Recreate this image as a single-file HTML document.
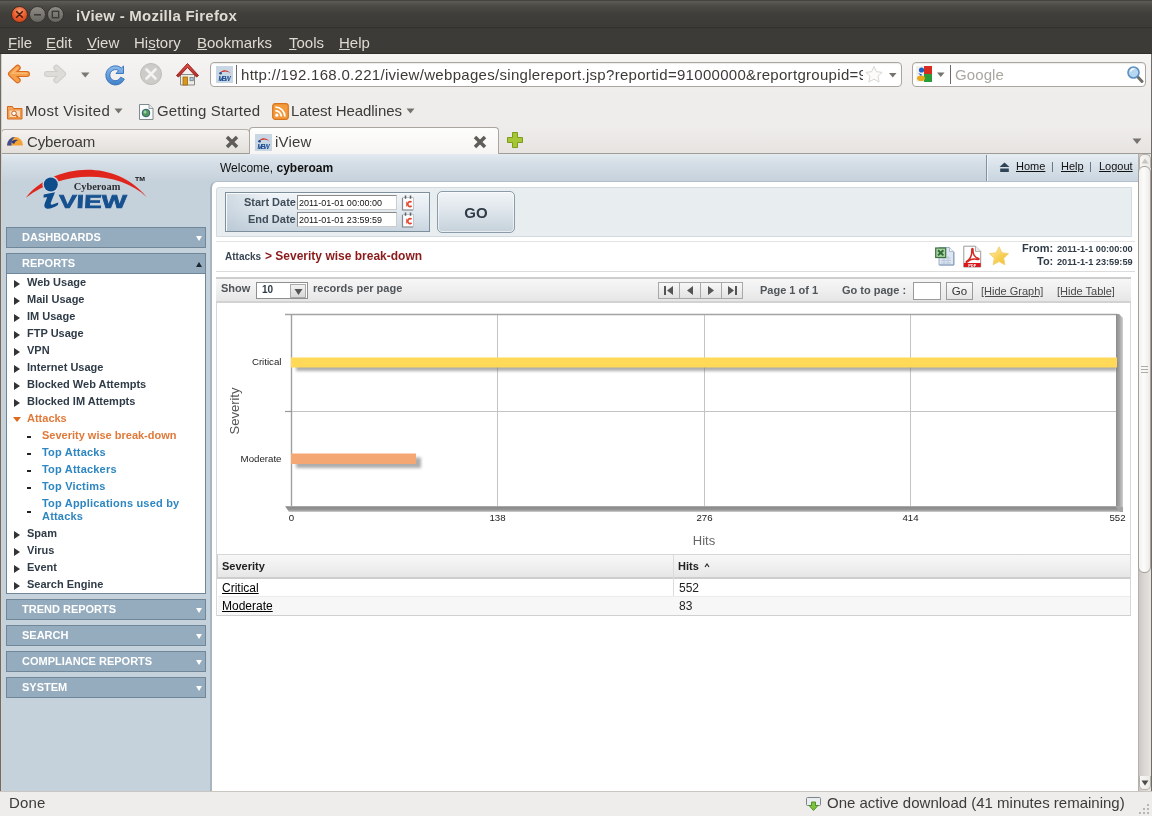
<!DOCTYPE html>
<html>
<head>
<meta charset="utf-8">
<title>iView - Mozilla Firefox</title>
<style>
*{box-sizing:border-box;margin:0;padding:0}
html,body{width:1152px;height:816px;overflow:hidden;background:#fff}
body{opacity:.9999;font-family:"Liberation Sans",Arial,sans-serif;font-size:12px;color:#000;position:relative}
.abs{position:absolute}
.ui{font-family:"Liberation Sans",sans-serif;font-size:15px;white-space:nowrap}
u{text-decoration:underline}
/* ---------- browser chrome ---------- */
#titlebar{left:0;top:0;width:1152px;height:29px;background:linear-gradient(#3a3935 0,#5b5a54 1.500px,#4b4a45 6px,#3f3e3a 14px,#3c3b37 26.500px,#33322e 27.500px,#3c3b37 29px);}
#titlebar .t{left:76px;top:7px;color:#dfdbd2;font-weight:bold;font-size:15px;letter-spacing:.24px}
#menubar{left:0;top:29px;width:1152px;height:25px;background:#3c3b37;border-bottom:1px solid #2f2e2b}
#menubar span{position:absolute;top:5px;color:#dfdbd2;font-size:15px}
#navbar{left:0;top:54px;width:1152px;height:42px;background:linear-gradient(#f5f4f3,#efedec)}
#bmbar{left:0;top:96px;width:1152px;height:30px;background:#efedec}
#tabbar{left:0;top:126px;width:1152px;height:28px;background:linear-gradient(#efedec,#e6e3e0)}
#status{left:0;top:791px;width:1152px;height:25px;background:#efedeb;border-top:1px solid #c9c5c0}
/* ---------- page ---------- */
#page{left:2px;top:154px;width:1136px;height:637px;background:#c5d2dc;overflow:hidden}
#side{left:0;top:0;width:209px;height:636px;background:linear-gradient(#e3eaf0 0,#d6dfe7 8px,#c5d1db 28px,#c5d2dc 100%)}
.hd{position:absolute;left:4px;width:200px;height:21px;background:#95acbe;border:1px solid #6f8799;color:#fff;font-weight:bold;font-size:11px;line-height:19px;padding-left:15px}
.hd i{position:absolute;right:3px;top:8px;width:0;height:0;border-left:3.5px solid transparent;border-right:3.5px solid transparent;border-top:5px solid #fff}
.hd i.up{border-top:none;border-bottom:5px solid #1b2630}

.li{position:absolute;left:25px;font-size:11px;font-weight:bold;color:#2f3b47;line-height:13px;white-space:nowrap}
.li.s{left:40px;color:#2e86c1;letter-spacing:.2px}
.li.s.o{letter-spacing:0}
.li.o{color:#e07a3a}
.tr{position:absolute;left:13px;width:0;height:0;border-top:4.500px solid transparent;border-bottom:4.500px solid transparent;border-left:6px solid #333}
.td{position:absolute;left:11px;width:0;height:0;border-left:4px solid transparent;border-right:4px solid transparent;border-top:5px solid #e06a1a}
.ds{position:absolute;left:25px;width:4px;height:2px;background:#222}
#list{position:absolute;left:4px;top:120px;width:200px;height:320px;background:#fff;border:1px solid #6f8799;border-top:none}
#list>*{margin-top:1px}

#main{left:-2px;top:-154px;width:1140px;height:944px}
#main div,#main span{position:absolute}
.b11{font-size:11px;font-weight:bold;color:#50555a;white-space:nowrap}
.lnk{font-size:11px;color:#111;text-decoration:underline;white-space:nowrap}
</style>
</head>
<body>
<div id="titlebar" class="abs">
<svg class="abs" style="left:8px;top:3px" width="60" height="24" viewBox="0 0 60 24">
<defs>
<radialGradient id="gc" cx="50%" cy="30%" r="70%"><stop offset="0" stop-color="#f79a6c"/><stop offset=".6" stop-color="#e9592a"/><stop offset="1" stop-color="#c8441c"/></radialGradient>
<linearGradient id="gg" x1="0" y1="0" x2="0" y2="1"><stop offset="0" stop-color="#8f8d86"/><stop offset="1" stop-color="#66645e"/></linearGradient>
</defs>
<circle cx="11.5" cy="11.5" r="8" fill="url(#gc)" stroke="#3a2a22" stroke-width="1"/>
<path d="M8.7 8.7l5.6 5.6M14.3 8.7l-5.6 5.6" stroke="#4a1d0c" stroke-width="1.6" stroke-linecap="round"/>
<circle cx="29.5" cy="11.5" r="8" fill="url(#gg)" stroke="#33322e" stroke-width="1"/>
<path d="M26 11.8h7" stroke="#3c3b37" stroke-width="1.6"/>
<circle cx="47.5" cy="11.5" r="8" fill="url(#gg)" stroke="#33322e" stroke-width="1"/>
<rect x="44.3" y="8.3" width="6.4" height="6.4" fill="none" stroke="#3c3b37" stroke-width="1.4"/>
</svg>
<span class="abs ui t">iView - Mozilla Firefox</span></div>
<div id="menubar" class="abs ui"><span style="left:8px"><u>F</u>ile</span><span style="left:46px"><u>E</u>dit</span><span style="left:87px"><u>V</u>iew</span><span style="left:134px">Hi<u>s</u>tory</span><span style="left:197px"><u>B</u>ookmarks</span><span style="left:289px"><u>T</u>ools</span><span style="left:339px"><u>H</u>elp</span></div>
<div id="navbar" class="abs">
<svg class="abs" style="left:0;top:0" width="210" height="42" viewBox="0 0 210 42">
<defs>
<linearGradient id="ga" x1="0" y1="0" x2="0" y2="1"><stop offset="0" stop-color="#f9b56f"/><stop offset="1" stop-color="#e8741d"/></linearGradient>
<linearGradient id="gf" x1="0" y1="0" x2="0" y2="1"><stop offset="0" stop-color="#e3e2e0"/><stop offset="1" stop-color="#cfcecb"/></linearGradient>
<linearGradient id="gr" x1="0" y1="0" x2="0" y2="1"><stop offset="0" stop-color="#8fbcec"/><stop offset="1" stop-color="#3f7fc8"/></linearGradient>
<linearGradient id="gh" x1="0" y1="0" x2="0" y2="1"><stop offset="0" stop-color="#e0524a"/><stop offset="1" stop-color="#b02a26"/></linearGradient>
</defs>
<!-- back -->
<g fill="none" stroke-linecap="round" stroke-linejoin="round"><path d="M27 20H12M17.700 13.700L11 20L17.700 26.300" stroke="#d9691c" stroke-width="6"/><path d="M27 20H12M17.700 13.700L11 20L17.700 26.300" stroke="#f6a04b" stroke-width="3.800"/><path d="M26.500 19.200H13M17.700 13.900L12 19.300" stroke="#f9b970" stroke-width="1.400"/></g>
<!-- forward -->
<g fill="none" stroke-linecap="round" stroke-linejoin="round"><path d="M47 20H62M56.300 13.700L63 20L56.300 26.300" stroke="#cfcecb" stroke-width="6"/><path d="M47 20H62M56.300 13.700L63 20L56.300 26.300" stroke="#dddcd9" stroke-width="3.800"/></g>
<path d="M81 18.5h8.5l-4.25 5z" fill="#7a7873"/>
<!-- reload -->
<path d="M123.5 12 L123.5 19.5 L116 19.5 L118.7 16.6 A5.6 5.6 0 1 0 120.6 23.2 L124.3 25 A9.6 9.6 0 1 1 121.4 13.9 Z" fill="url(#gr)" stroke="#3c78bd" stroke-width="1" stroke-linejoin="round"/>
<!-- stop -->
<circle cx="151" cy="20" r="10.5" fill="#cdccc9" stroke="#bdbcb8"/>
<path d="M146.5 15.5l9 9M155.5 15.5l-9 9" stroke="#f4f3f2" stroke-width="2.6" stroke-linecap="round"/>
<!-- home -->
<path d="M180.5 20.5h14v10.5h-14z" fill="#f0ece2" stroke="#8a8a84"/>
<path d="M176.5 21.5 L187.5 9.5 L198.5 21.5 L196.5 23 L187.5 13.5 L178.5 23 Z" fill="url(#gh)" stroke="#9a2320" stroke-width="1" stroke-linejoin="round"/>
<rect x="183" y="23" width="4.5" height="8" fill="#d8981e" stroke="#9b6a10" stroke-width=".8"/>
<rect x="190" y="23.5" width="3.2" height="3.2" fill="#aec6d8" stroke="#6c7f8c" stroke-width=".8"/>
</svg>
<div class="abs" style="left:210px;top:8px;width:692px;height:25px;background:#fff;border:1px solid #aaa69f;border-radius:4px;box-shadow:inset 0 1px 1px rgba(0,0,0,.08)"></div>
<div class="abs" style="left:216px;top:12px;width:17px;height:17px;background:#c9d6e3"></div>
<svg class="abs" style="left:216px;top:12px" width="17" height="17" viewBox="0 0 17 17"><path d="M3 8 Q8 1 15 7.5 Q9 3.5 3 8z" fill="#d0261e"/><circle cx="4.6" cy="7.3" r="1.3" fill="#1f4f94"/><text x="2.6" y="14.6" font-family="Liberation Sans" font-weight="bold" font-style="italic" font-size="6.5" fill="#1f4f94" textLength="12">iVIEW</text></svg>
<div class="abs" style="left:236px;top:11px;width:1px;height:19px;background:#6e6b66"></div>
<div class="abs ui" style="left:241px;top:8px;width:622px;height:25px;line-height:26px;overflow:hidden;color:#3c3b37;letter-spacing:.3px">http://192.168.0.221/iview/webpages/singlereport.jsp?reportid=91000000&amp;reportgroupid=91000000</div>
<svg class="abs" style="left:864px;top:11px" width="36" height="20" viewBox="0 0 36 20"><path d="M10 1.5l2.5 5.2 5.6.7-4.1 3.9 1.1 5.7-5.1-2.8-5.1 2.8 1.1-5.700-4.100-3.900 5.600-.700z" fill="#fbfbfa" stroke="#d9d7d3" stroke-width="1" stroke-linejoin="round"/><path d="M25 8h7.500l-3.750 4.500z" fill="#76736e"/></svg>
<div class="abs" style="left:912px;top:8px;width:234px;height:25px;background:#fff;border:1px solid #aaa69f;border-radius:4px;box-shadow:inset 0 1px 1px rgba(0,0,0,.08)"></div>
<svg class="abs" style="left:916px;top:12px" width="34" height="17" viewBox="0 0 34 17"><rect x="0" y="0" width="16" height="16" fill="#f4f4f4"/><rect x="8" y="0" width="8" height="8" fill="#d62d20"/><rect x="8" y="8" width="8" height="8" fill="#2a9c3a"/><rect x="0" y="0" width="8" height="16" fill="#f1f1ee"/><circle cx="5.500" cy="4" r="2.600" fill="#1c5fc6"/><ellipse cx="5" cy="12.300" rx="4" ry="2.800" fill="#e8a91a"/><path d="M2 7l4 1.500-1 1.500z" fill="#1c5fc6"/><path d="M21 6.500h7.500l-3.750 4.500z" fill="#76736e"/></svg>
<div class="abs" style="left:950px;top:11px;width:1px;height:19px;background:#6e6b66"></div>
<div class="abs ui" style="left:955px;top:8px;line-height:26px;color:#aaa7a1;letter-spacing:.1px">Google</div>
<svg class="abs" style="left:1126px;top:11px" width="18" height="19" viewBox="0 0 18 19"><path d="M10.500 10.500l5.500 6" stroke="#6f6d68" stroke-width="3" stroke-linecap="round"/><circle cx="7.500" cy="7.500" r="5.500" fill="#b7d6f2" stroke="#5b8fc4" stroke-width="1.600"/><path d="M4.500 6.500a3.500 3.500 0 0 1 4-2.500" stroke="#fff" stroke-width="1.200" fill="none"/></svg>
</div>
<div id="bmbar" class="abs">
<svg class="abs" style="left:6px;top:7px" width="18" height="18" viewBox="0 0 18 18"><path d="M1.500 3.500h5l1 2h8.500v10.500h-14.500z" fill="#f6a55a" stroke="#d2691e" stroke-width="1" stroke-linejoin="round"/><rect x="3" y="7" width="11.500" height="7.500" fill="#fbd9b4" stroke="#e88a3a" stroke-width=".8"/><circle cx="8" cy="10.300" r="2.300" fill="#fff" stroke="#c95f17" stroke-width="1"/><path d="M9.700 12l2.300 2.300" stroke="#c95f17" stroke-width="1.300"/></svg>
<span class="abs ui" style="left:25px;top:6px;color:#3c3b37;letter-spacing:.3px">Most Visited</span>
<svg class="abs" style="left:114px;top:12px" width="9" height="6"><path d="M.5.500h8l-4 5z" fill="#76736e"/></svg>
<svg class="abs" style="left:138px;top:7px" width="17" height="18" viewBox="0 0 17 18"><path d="M1.500 1.500h9.500l4 4v11h-13.500z" fill="#fbfbfa" stroke="#7f8a8f" stroke-width="1" stroke-linejoin="round"/><path d="M11 1.500v4h4" fill="#e4e8ea" stroke="#7f8a8f" stroke-width=".8"/><circle cx="8" cy="10" r="3.800" fill="#4f9a5a" stroke="#2f5f7a" stroke-width="1"/><circle cx="7" cy="9" r="1.500" fill="#9fd0a0"/></svg>
<span class="abs ui" style="left:157px;top:6px;color:#3c3b37;letter-spacing:.15px">Getting Started</span>
<svg class="abs" style="left:272px;top:7px" width="17" height="17" viewBox="0 0 17 17"><rect x=".7" y=".7" width="15.600" height="15.600" rx="2.500" fill="#f39a3c" stroke="#d9741a" stroke-width="1.200"/><circle cx="4.800" cy="12.200" r="1.600" fill="#fff"/><path d="M3.300 7.600a6 6 0 0 1 6 6M3.300 4a9.600 9.600 0 0 1 9.600 9.600" stroke="#fff" stroke-width="1.700" fill="none"/></svg>
<span class="abs ui" style="left:291px;top:6px;color:#3c3b37;letter-spacing:-.05px">Latest Headlines</span>
<svg class="abs" style="left:406px;top:12px" width="9" height="6"><path d="M.5.500h8l-4 5z" fill="#76736e"/></svg>
</div>
<div id="tabbar" class="abs">
<div class="abs" style="left:0;top:27px;width:1152px;height:1px;background:#9f9b95"></div>
<div class="abs" style="left:1px;top:3px;width:249px;height:24px;border:1px solid #b5b1ab;border-bottom:none;border-radius:4px 4px 0 0;background:linear-gradient(#f4f2f0,#e2dfdb)"></div>
<svg class="abs" style="left:6px;top:8px" width="18" height="12" viewBox="0 0 18 12"><path d="M1 11.500a8 8.500 0 0 1 16 0z" fill="#f2a134"/><path d="M1 11.500a8 8.500 0 0 1 8-8.500c-3 2-4 5-3.500 8.500z" fill="#3b4f9a"/><path d="M5 8q3-3 7-2q-3 1-4 4z" fill="#2c3c7c"/></svg>
<span class="abs ui" style="left:27px;top:7px;color:#3c3b37;letter-spacing:-.15px">Cyberoam</span>
<svg class="abs" style="left:225px;top:9px" width="14" height="14" viewBox="0 0 14 14"><path d="M2 2l10 10M12 2l-10 10" stroke="#5f5d59" stroke-width="3.500"/></svg>
<div class="abs" style="left:249px;top:1px;width:250px;height:27px;border:1px solid #aaa69f;border-bottom:none;border-radius:4px 4px 0 0;background:linear-gradient(#fdfdfc,#f6f5f4)"></div>
<svg class="abs" style="left:255px;top:8px" width="17" height="17" viewBox="0 0 17 17"><rect width="17" height="17" fill="#c9d6e3"/><path d="M3 8 Q8 1 15 7.500 Q9 3.500 3 8z" fill="#d0261e"/><circle cx="4.600" cy="7.300" r="1.300" fill="#1f4f94"/><text x="2.600" y="14.600" font-family="Liberation Sans" font-weight="bold" font-style="italic" font-size="6.500" fill="#1f4f94" textLength="12">iVIEW</text></svg>
<span class="abs ui" style="left:275px;top:7px;color:#3c3b37;letter-spacing:.2px">iView</span>
<svg class="abs" style="left:473px;top:9px" width="14" height="14" viewBox="0 0 14 14"><path d="M2 2l10 10M12 2l-10 10" stroke="#5f5d59" stroke-width="3.500"/></svg>
<svg class="abs" style="left:506px;top:5px" width="18" height="18" viewBox="0 0 18 18"><path d="M6.500 1.500h5v5h5v5h-5v5h-5v-5h-5v-5h5z" fill="#a5c736" stroke="#7d9c1e" stroke-width="1" stroke-linejoin="round"/></svg>
<svg class="abs" style="left:1132px;top:12px" width="10" height="7"><path d="M.5.500h9l-4.500 5.500z" fill="#76736e"/></svg>
</div>
<div id="page" class="abs">
<div id="side" class="abs">
<svg class="abs" style="left:20px;top:12px" width="135" height="48" viewBox="22 166 135 48">
<path d="M25.900 197.800 C48 168 110 154 146.800 197.200 C118 170 62 170 25.900 197.800z" fill="#e0261c"/>
<circle cx="50.800" cy="184.500" r="8.400" fill="#cbd7e1"/>
<circle cx="50.800" cy="184.500" r="7" fill="#0f4c8c"/>
<path d="M43.800 194.600 L55 192.300 L50.700 203 Q50.200 205.200 52.700 204.600 L58.300 202.400 L57.900 205 Q51 209.300 47 208.700 Q43.300 207.800 44.700 203.600 L47.200 197.200 L43.400 197.500 Z" fill="#0f4c8c"/>
<text x="58.500" y="208.200" transform="translate(0 208.200) skewX(-3) translate(0 -208.200)" font-family="Liberation Sans" font-weight="bold" font-size="18.600" fill="#17508f" stroke="#17508f" stroke-width=".7" textLength="68" lengthAdjust="spacingAndGlyphs">VIEW</text>
<text x="73.800" y="190.300" font-family="Liberation Serif" font-weight="bold" font-size="10" fill="#2d2f33" textLength="46.500" lengthAdjust="spacingAndGlyphs">Cyberoam</text>
<text x="135" y="181" font-family="Liberation Sans" font-weight="bold" font-size="6.200" fill="#111" textLength="10" lengthAdjust="spacingAndGlyphs">TM</text>
</svg>
<div class="hd" style="top:73px">DASHBOARDS<i></i></div>
<div class="hd" style="top:99px">REPORTS<i class="up"></i></div>
<div id="list">
<i class="tr" style="left:7px;top:4.5px"></i><span class="li" style="left:20px;top:1px">Web Usage</span>
<i class="tr" style="left:7px;top:21.5px"></i><span class="li" style="left:20px;top:18px">Mail Usage</span>
<i class="tr" style="left:7px;top:38.5px"></i><span class="li" style="left:20px;top:35px">IM Usage</span>
<i class="tr" style="left:7px;top:55.5px"></i><span class="li" style="left:20px;top:52px">FTP Usage</span>
<i class="tr" style="left:7px;top:72.5px"></i><span class="li" style="left:20px;top:69px">VPN</span>
<i class="tr" style="left:7px;top:89.5px"></i><span class="li" style="left:20px;top:86px">Internet Usage</span>
<i class="tr" style="left:7px;top:106.5px"></i><span class="li" style="left:20px;top:103px">Blocked Web Attempts</span>
<i class="tr" style="left:7px;top:123.5px"></i><span class="li" style="left:20px;top:120px">Blocked IM Attempts</span>
<i class="td" style="left:6px;top:142px"></i><span class="li o" style="left:20px;top:137px">Attacks</span>
<i class="ds" style="left:20px;top:161px"></i><span class="li s o" style="left:35px;top:154px">Severity wise break-down</span>
<i class="ds" style="left:20px;top:178px"></i><span class="li s" style="left:35px;top:171px">Top Attacks</span>
<i class="ds" style="left:20px;top:195px"></i><span class="li s" style="left:35px;top:188px">Top Attackers</span>
<i class="ds" style="left:20px;top:212px"></i><span class="li s" style="left:35px;top:205px">Top Victims</span>
<i class="ds" style="left:20px;top:235.5px"></i><span class="li s" style="left:35px;top:222px">Top Applications used by<br>Attacks</span>
<i class="tr" style="left:7px;top:255.5px"></i><span class="li" style="left:20px;top:252px">Spam</span>
<i class="tr" style="left:7px;top:272.5px"></i><span class="li" style="left:20px;top:269px">Virus</span>
<i class="tr" style="left:7px;top:289.5px"></i><span class="li" style="left:20px;top:286px">Event</span>
<i class="tr" style="left:7px;top:306.5px"></i><span class="li" style="left:20px;top:303px">Search Engine</span>
</div>
<div class="hd" style="top:445px">TREND REPORTS<i></i></div>
<div class="hd" style="top:471px">SEARCH<i></i></div>
<div class="hd" style="top:497px">COMPLIANCE REPORTS<i></i></div>
<div class="hd" style="top:523px">SYSTEM<i></i></div>
</div>
<div id="main" class="abs">
<!-- top strip -->
<div style="left:211px;top:154px;width:927px;height:28px;background:linear-gradient(#e3eaf0 0,#d6dfe7 8px,#c5d1db 28px)"></div>
<div style="left:986px;top:155px;width:1px;height:26px;background:#7f92a2"></div>
<div style="left:987px;top:155px;width:151px;height:26px;border-left:1px solid #eef2f6;background:linear-gradient(#e6edf3 0,#d9e2ea 40%,#c9d5df 100%)"></div>
<span style="left:220px;top:161px;font-size:12px;color:#111;white-space:nowrap">Welcome, <b>cyberoam</b></span>
<svg style="position:absolute;left:999px;top:162px" width="11" height="11" viewBox="0 0 11 11"><path d="M5.500 0.500L10.500 5h-10z" fill="#2f4456"/><rect x="1.200" y="6.500" width="8.600" height="3.500" fill="#2f4456"/></svg>
<span class="lnk" style="left:1016px;top:160px">Home</span>
<span style="left:1051px;top:160px;font-size:11px;color:#5c6b78">|</span>
<span class="lnk" style="left:1061px;top:160px">Help</span>
<span style="left:1089px;top:160px;font-size:11px;color:#5c6b78">|</span>
<span class="lnk" style="left:1099px;top:160px">Logout</span>
<!-- white panel -->
<div style="left:210px;top:181px;width:930px;height:700px;background:#fff;border-left:2px solid #a8b5bf;border-top:1px solid #b3c0cb;border-radius:7px 0 0 0"></div>
<div style="left:216px;top:187px;width:916px;height:50px;background:#e8edf0;border:1px solid #d3dbe1;border-radius:3px 0 0 0"></div>
<div style="left:225px;top:192px;width:205px;height:40px;border:1px solid #7d8f9d;background:linear-gradient(90deg,rgba(170,188,203,.45) 0,rgba(255,255,255,0) 22%),linear-gradient(#f1f5f8 0,#e3eaf0 45%,#c9d5df 100%);box-shadow:inset 1px 1px 0 #f8fafb"></div>
<span class="b11" style="left:244px;top:196px;font-size:11px;color:#3f4d5a">Start Date</span>
<span class="b11" style="left:248px;top:213px;font-size:11px;color:#3f4d5a">End Date</span>
<div style="left:297px;top:195px;width:100px;height:15px;background:#fff;border:1px solid #8a8a8a;border-right-color:#ccc;border-bottom-color:#ccc"></div>
<div style="left:297px;top:212px;width:100px;height:15px;background:#fff;border:1px solid #8a8a8a;border-right-color:#ccc;border-bottom-color:#ccc"></div>
<span style="left:299px;top:198px;font-size:9px;color:#111;white-space:nowrap">2011-01-01 00:00:00</span>
<span style="left:299px;top:215px;font-size:9px;color:#111;white-space:nowrap">2011-01-01 23:59:59</span>
<div style="left:437px;top:191px;width:78px;height:42px;border:1px solid #8b9ba8;border-radius:5px;background:linear-gradient(#f1f4f7 0,#dfe6ec 45%,#c5d1da 100%);box-shadow:inset 0 0 0 1px rgba(255,255,255,.6)"></div>
<span style="left:437px;top:204px;width:78px;text-align:center;font-size:15px;font-weight:bold;color:#2f3b47">GO</span>
<svg style="position:absolute;left:401px;top:195px" width="14" height="16" viewBox="0 0 14 16"><path d="M1.500 2.500h11v12.500h-11z" fill="#fcfcfc" stroke="#c3c6c9" stroke-width="1"/><path d="M1.500 3v12h10.500" fill="none" stroke="#85898d" stroke-width="1.200"/><path d="M4.500 .6v3.200M9.500 .6v3.200" stroke="#5d6268" stroke-width="1.500"/><path d="M10.600 7.200a2.400 2.400 0 1 0 0 3.800" fill="none" stroke="#e4452e" stroke-width="1.700"/><path d="M5.600 6.800v4.600" stroke="#ea6a55" stroke-width="1.100"/></svg>
<svg style="position:absolute;left:401px;top:212px" width="14" height="16" viewBox="0 0 14 16"><path d="M1.500 2.500h11v12.500h-11z" fill="#fcfcfc" stroke="#c3c6c9" stroke-width="1"/><path d="M1.500 3v12h10.500" fill="none" stroke="#85898d" stroke-width="1.200"/><path d="M4.500 .6v3.200M9.500 .6v3.200" stroke="#5d6268" stroke-width="1.500"/><path d="M10.600 7.200a2.400 2.400 0 1 0 0 3.800" fill="none" stroke="#e4452e" stroke-width="1.700"/><path d="M5.600 6.800v4.600" stroke="#ea6a55" stroke-width="1.100"/></svg>
<svg style="position:absolute;left:935px;top:246px" width="20" height="20" viewBox="0 0 20 20">
<path d="M4 1.500h10.500l4 4v13.500h-14.500z" fill="#dde6f2" stroke="#9fb0c6" stroke-width="1"/>
<path d="M14.500 1.500v4h4" fill="#f2f6fb" stroke="#9fb0c6" stroke-width=".8"/>
<path d="M6 12h10M6 14.500h10M6 17h10M9 10v8M13 10v8" stroke="#b7c5d8" stroke-width=".8"/>
<path d="M4.500 19h14.500v-13" fill="none" stroke="#8aa0bb" stroke-width="1"/>
<rect x=".7" y="2" width="10" height="9.500" fill="#a9d3a4" stroke="#3d7040" stroke-width="1.200"/>
<path d="M3 4.200l5.400 5.200M8.400 4.200l-5.400 5.200" stroke="#2f6a34" stroke-width="1.900"/>
</svg>
<svg style="position:absolute;left:963px;top:245px" width="19" height="23" viewBox="0 0 19 23">
<path d="M.800 1.200h11.700l5.200 5.200v15.600h-16.900z" fill="#fff" stroke="#9a9a9a" stroke-width="1"/>
<path d="M12.500 1.200v5.200h5.200" fill="#eee" stroke="#9a9a9a" stroke-width=".8"/>
<rect x=".8" y="18" width="16.900" height="4" fill="#d8181c"/>
<text x="9.200" y="21.600" text-anchor="middle" font-family="Liberation Sans" font-weight="bold" font-size="4" fill="#fff">PDF</text>
<path d="M3.500 16.500 C7 14.500 9 10 8.800 5 C8.700 3 10.200 3 10 5 C9.600 9 12 12.500 15 13.200 C16.500 13.500 16.200 14.800 14.800 14.500 C10.500 13.600 6.500 14.500 4.200 17 C3.300 17.800 2.600 17.100 3.500 16.500z" fill="none" stroke="#d22a22" stroke-width="1.500" stroke-linejoin="round"/>
</svg>
<svg style="position:absolute;left:988px;top:245px" width="22" height="22" viewBox="0 0 22 22">
<defs><linearGradient id="st" x1="0" y1="0" x2="1" y2="1"><stop offset="0" stop-color="#fdf0b8"/><stop offset=".45" stop-color="#fad560"/><stop offset="1" stop-color="#f2b92c"/></linearGradient></defs>
<path d="M11 1.800l2.900 6 6.600.8-4.800 4.600 1.200 6.600-5.900-3.200-5.900 3.200 1.200-6.600-4.800-4.600 6.600-.8z" fill="url(#st)" stroke="#f3d27a" stroke-width="1" stroke-linejoin="round"/>
</svg>
<!-- breadcrumb -->
<div style="left:216px;top:241px;width:919px;height:1px;background:#e3e3e3"></div>
<span style="left:225px;top:251px;font-size:10px;font-weight:bold;color:#3a4654;white-space:nowrap">Attacks</span>
<span style="left:265px;top:249px;font-size:12px;font-weight:bold;color:#8b1a1a;white-space:nowrap">&gt; Severity wise break-down</span>
<span class="b11" style="left:1022px;top:242px;color:#2f3b47;font-size:11px">From:</span>
<span class="b11" style="left:1037px;top:255px;color:#2f3b47;font-size:11px">To:</span>
<span class="b11" style="left:1057px;top:244px;color:#2f3b47;font-size:9.200px">2011-1-1 00:00:00</span>
<span class="b11" style="left:1057px;top:257px;color:#2f3b47;font-size:9.200px">2011-1-1 23:59:59</span>
<div style="left:216px;top:271px;width:919px;height:1px;background:#dcdcdc"></div>

<!-- toolbar -->
<div style="left:216px;top:277px;width:915px;height:26px;background:linear-gradient(#f6f6f6 0,#efefef 50%,#e6e6e6 100%);border-top:2px solid #cdcdcd;border-bottom:2px solid #d2d2d2"></div>
<span class="b11" style="left:221px;top:282px">Show</span>
<div style="left:256px;top:282px;width:52px;height:17px;background:#fff;border:1px solid #8f8f8f"></div>
<span style="left:262px;top:284px;font-size:10px;font-weight:bold;color:#2f3b47">10</span>
<div style="left:290px;top:284px;width:16px;height:14px;background:linear-gradient(#f2f2f2,#d8d8d8);border:1px solid #aaa"></div>
<svg style="position:absolute;left:294px;top:288px" width="9" height="8"><path d="M.5 1h8l-4 6z" fill="#555"/></svg>
<span class="b11" style="left:313px;top:282px">records per page</span>
<div style="left:658px;top:282px;width:22px;height:17px;background:linear-gradient(#f8f8f8,#e2e2e2);border:1px solid #a8a8a8"></div>
<div style="left:679px;top:282px;width:22px;height:17px;background:linear-gradient(#f8f8f8,#e2e2e2);border:1px solid #a8a8a8"></div>
<div style="left:700px;top:282px;width:22px;height:17px;background:linear-gradient(#f8f8f8,#e2e2e2);border:1px solid #a8a8a8"></div>
<div style="left:721px;top:282px;width:22px;height:17px;background:linear-gradient(#f8f8f8,#e2e2e2);border:1px solid #a8a8a8"></div>
<svg style="position:absolute;left:658px;top:282px" width="85" height="17" viewBox="0 0 85 17">
<g fill="#555"><rect x="6" y="4" width="2" height="9"/><path d="M15 4v9l-6-4.500z"/>
<path d="M35 4v9l-6-4.500z"/>
<path d="M50 4v9l6-4.500z"/>
<path d="M70 4v9l6-4.500z"/><rect x="77" y="4" width="2" height="9"/></g></svg>
<span class="b11" style="left:760px;top:284px">Page 1 of 1</span>
<span class="b11" style="left:842px;top:284px">Go to page :</span>
<div style="left:913px;top:282px;width:28px;height:18px;background:#fff;border:1px solid #9a9a9a"></div>
<div style="left:946px;top:282px;width:27px;height:18px;background:linear-gradient(#fafafa,#e4e4e4);border:1px solid #9a9a9a"></div>
<span style="left:946px;top:285px;width:27px;text-align:center;font-size:11.500px;color:#333">Go</span>
<span class="lnk" style="left:981px;top:285px;color:#4a4a4a">[Hide Graph]</span>
<span class="lnk" style="left:1057px;top:285px;color:#4a4a4a">[Hide Table]</span>
<!-- chart container -->
<div style="left:216px;top:303px;width:915px;height:313px;border-left:1px solid #d8d8d8;border-right:1px solid #d8d8d8"></div>
<svg style="position:absolute;left:218px;top:303px" width="912" height="250" viewBox="218 303 912 250" font-family="Liberation Sans, sans-serif">
<defs>
<linearGradient id="fr" x1="0" y1="0" x2="1" y2="0"><stop offset="0" stop-color="#8c8c8c"/><stop offset=".5" stop-color="#a4a4a4"/><stop offset="1" stop-color="#cfcfcf"/></linearGradient>
<linearGradient id="fb" x1="0" y1="0" x2="0" y2="1"><stop offset="0" stop-color="#bdbdbd"/><stop offset=".2" stop-color="#8a8a8a"/><stop offset=".55" stop-color="#929292"/><stop offset=".8" stop-color="#ababab"/><stop offset="1" stop-color="#d6d6d6"/></linearGradient>
<filter id="sh" x="-5%" y="-50%" width="110%" height="250%"><feGaussianBlur stdDeviation="1.600"/></filter>
</defs>
<!-- grid -->
<g stroke="#c4c4c4" stroke-width="1">
<path d="M497.500 314v198M704.500 314v198M910.500 314v198M291 411.500h826"/>
</g>
<!-- frame -->
<path d="M285 314.500h832" stroke="#a3a3a3" stroke-width="1.300"/>
<path d="M291.500 314v194" stroke="#a0a0a0" stroke-width="1.400"/>
<path d="M285 411.500h7" stroke="#999" stroke-width="1.200"/>
<path d="M1116 314 L1119 314 L1123 318 L1123 511 L1116 511z" fill="url(#fr)"/>
<path d="M285 506 L1120 506 L1123 512 L289 512z" fill="url(#fb)"/>
<path d="M1116 507h7v5h-3z" fill="#a5a5a5"/>
<!-- bar shadows -->
<rect x="296" y="361.500" width="821" height="9.500" fill="#777" opacity=".6" filter="url(#sh)"/>
<rect x="296" y="457.500" width="125" height="10.500" fill="#777" opacity=".6" filter="url(#sh)"/>
<!-- bars -->
<rect x="291" y="357.500" width="826" height="10" fill="#ffd957"/>
<rect x="291" y="453.500" width="125" height="10.500" fill="#f4a772"/>
<!-- labels -->
<g font-size="9.700" fill="#1c1c1c">
<text x="281.500" y="365" text-anchor="end">Critical</text>
<text x="281.500" y="462" text-anchor="end">Moderate</text>
<text x="291.500" y="521" text-anchor="middle">0</text>
<text x="497.500" y="521" text-anchor="middle">138</text>
<text x="704.500" y="521" text-anchor="middle">276</text>
<text x="910.500" y="521" text-anchor="middle">414</text>
<text x="1117.500" y="521" text-anchor="middle">552</text>
</g>
<text x="704" y="545" text-anchor="middle" font-size="13" fill="#666">Hits</text>
<text transform="translate(239 411) rotate(-90)" text-anchor="middle" font-size="13" fill="#555">Severity</text>
</svg>
<!-- table -->
<div style="left:217px;top:554px;width:914px;height:25px;background:linear-gradient(#f7f7f7 0,#eeeeee 60%,#e6e6e6 100%);border-top:1px solid #d6d6d6;border-bottom:2px solid #cdcdcd;border-left:1px solid #d0d0d0;border-right:1px solid #d8d8d8"></div>
<div style="left:673px;top:555px;width:1px;height:60px;background:#dcdcdc"></div>
<span style="left:222px;top:560px;font-size:11px;font-weight:bold;color:#222">Severity</span>
<span style="left:678px;top:560px;font-size:11px;font-weight:bold;color:#222">Hits</span>
<svg style="position:absolute;left:704px;top:563px" width="6" height="5"><path d="M1 4l2-3 2 3" stroke="#222" stroke-width="1.100" fill="none"/></svg>
<div style="left:218px;top:596px;width:912px;height:19px;background:#f7f7f7;border-top:1px solid #ececec"></div>
<div style="left:217px;top:615px;width:914px;height:1px;background:#d0d0d0"></div>
<span class="lnk" style="left:222px;top:581px;font-size:12px;color:#000">Critical</span>
<span class="lnk" style="left:222px;top:599px;font-size:12px;color:#000">Moderate</span>
<span style="left:679px;top:581px;font-size:12px;color:#222">552</span>
<span style="left:679px;top:599px;font-size:12px;color:#222">83</span>

</div>
</div>
<div class="abs" style="left:1138px;top:154px;width:13px;height:637px;background:linear-gradient(90deg,#cbc8c4 0,#d9d6d3 40%,#e6e4e1 100%);border-left:1px solid #b5b1ab"></div>
<div class="abs" style="left:1139px;top:154px;width:12px;height:14px;background:linear-gradient(90deg,#f8f7f6,#eceae8);border-radius:5px 5px 0 0;border:1px solid #b5b1ab;border-bottom:none"></div>
<svg class="abs" style="left:1141px;top:158px" width="8" height="6"><path d="M.5 5.500h7l-3.500-5z" fill="#c9c6c1"/></svg>
<div class="abs" style="left:1138px;top:166px;width:13px;height:407px;background:linear-gradient(90deg,#f3f2f0 0,#fbfbfa 45%,#ecebe9 100%);border:1px solid #a49f99;border-radius:6px"></div>
<svg class="abs" style="left:1141px;top:365px" width="7" height="8"><path d="M0 1.500h7M0 4.500h7M0 7.500h7" stroke="#aeaaa4" stroke-width="1"/></svg>
<div class="abs" style="left:1139px;top:776px;width:12px;height:14px;background:linear-gradient(90deg,#f8f7f6,#eceae8);border-radius:0 0 5px 5px;border:1px solid #b5b1ab;border-top:none"></div>
<svg class="abs" style="left:1141px;top:780px" width="8" height="6"><path d="M.5.500h7l-3.500 5z" fill="#4e4c48"/></svg>
<div class="abs" style="left:0;top:54px;width:1px;height:762px;background:#6f6c66"></div>
<div class="abs" style="left:1px;top:54px;width:1px;height:762px;background:#d5d2cd"></div>
<div class="abs" style="left:1151px;top:54px;width:1px;height:762px;background:#6f6c66"></div>
<div class="abs" style="left:0;top:815px;width:1152px;height:1px;background:#6f6c66"></div>
<div id="status" class="abs">
<span class="abs ui" style="left:9px;top:2px;color:#3c3b37;letter-spacing:.2px">Done</span>
<svg class="abs" style="left:805px;top:4px" width="17" height="16" viewBox="0 0 17 16"><rect x="1.500" y="1.500" width="14" height="8" rx="1" fill="#e9edf0" stroke="#7b858c"/><path d="M6.500 6h4v3.500h2.500l-4.500 5-4.500-5h2.500z" fill="#7ec242" stroke="#4b8a1c" stroke-width=".9" stroke-linejoin="round"/></svg>
<span class="abs ui" style="left:827px;top:2px;color:#3c3b37">One active download (41 minutes remaining)</span>
<svg class="abs" style="left:1138px;top:11px" width="13" height="13" viewBox="0 0 13 13"><g fill="#b9b5af"><rect x="9" y="1" width="2" height="2"/><rect x="5" y="5" width="2" height="2"/><rect x="9" y="5" width="2" height="2"/><rect x="1" y="9" width="2" height="2"/><rect x="5" y="9" width="2" height="2"/><rect x="9" y="9" width="2" height="2"/></g></svg>
</div>
</body>
</html>
